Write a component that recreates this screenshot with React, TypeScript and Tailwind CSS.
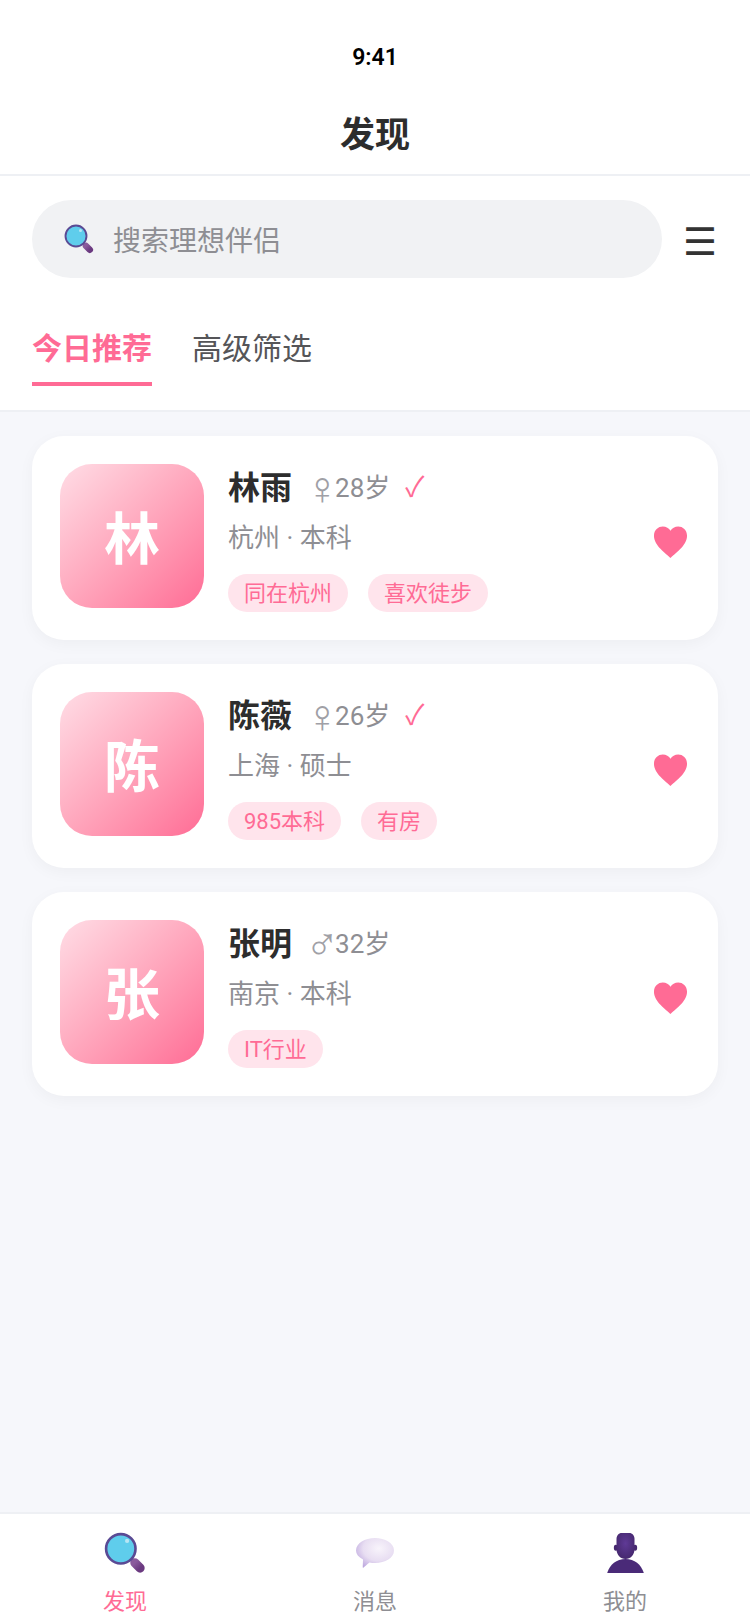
import React from "react";

const FONT = 'Roboto, "Noto Sans CJK SC", sans-serif';

interface Person {
  initial: string;
  name: string;
  gender: string;
  age: string;
  verified: boolean;
  info: string;
  tags: string[];
}

const PEOPLE: Person[] = [
  { initial: "林", name: "林雨", gender: "♀", age: "28岁", verified: true, info: "杭州 · 本科", tags: ["同在杭州", "喜欢徒步"] },
  { initial: "陈", name: "陈薇", gender: "♀", age: "26岁", verified: true, info: "上海 · 硕士", tags: ["985本科", "有房"] },
  { initial: "张", name: "张明", gender: "♂", age: "32岁", verified: false, info: "南京 · 本科", tags: ["IT行业"] },
];

const SearchIcon = ({ id, className }: { id: string; className: string }) => (
  <svg viewBox="0 0 32 32" className={className}>
    <defs>
      <linearGradient id={id} x1="0" y1="0" x2="1" y2="1">
        <stop offset="0" stopColor="#8a5a9c" />
        <stop offset="1" stopColor="#6b3a80" />
      </linearGradient>
    </defs>
    <path d="M19 19 L23 23" stroke="#5a4a94" strokeWidth="3" />
    <path d="M23.500 23.500 L27.500 27.500" stroke={`url(#${id})`} strokeWidth="7" strokeLinecap="round" />
    <circle cx="12.800" cy="12.800" r="11.200" fill="#5fcdec" stroke="#5a4a94" strokeWidth="2" />
    <circle cx="17.600" cy="6.800" r="1.600" fill="#b8e6f4" />
  </svg>
);

const BubbleIcon = () => (
  <svg viewBox="0 0 38 30" className="h-[30px] w-[38px]">
    <defs>
      <radialGradient id="bubble" cx="0.6" cy="0.35" r="0.75">
        <stop offset="0" stopColor="#f8f4fb" />
        <stop offset="0.55" stopColor="#e8def2" />
        <stop offset="1" stopColor="#b9a2dc" />
      </radialGradient>
    </defs>
    <path d="M19 0C29 0 38 5 38 12.500C38 20 29 25 19 25C17 25 15 24.800 13.500 24.400C11 26.500 8 29 7 30C6.500 29 7 25 7 21.500C2.500 19 0 16 0 12.500C0 5 9 0 19 0Z" fill="url(#bubble)" />
  </svg>
);

const PersonIcon = () => (
  <svg viewBox="0 0 110 120" className="h-[40px] w-[37px]">
    <defs>
      <radialGradient id="person" cx="0.5" cy="0.4" r="0.6">
        <stop offset="0" stopColor="#5f3a96" />
        <stop offset="1" stopColor="#46286f" />
      </radialGradient>
    </defs>
    <ellipse cx="26" cy="44" rx="6" ry="9" fill="#46286f" />
    <ellipse cx="84" cy="44" rx="6" ry="9" fill="#46286f" />
    <path d="M0 120C8 94 28 78 55 78C82 78 102 94 110 120Z" fill="#4a2a78" />
    <path d="M44 0H66C76 0 82 8 82 18V48C82 66 70 78 55 78C40 78 28 66 28 48V18C28 8 34 0 44 0Z" fill="url(#person)" />
  </svg>
);

const Card = ({ person }: { person: Person }) => (
  <div className="flex h-[204px] items-start rounded-[32px] bg-white pl-[28px] pr-[30px] pt-[28px] shadow-[0_4px_16px_rgba(0,0,0,0.04)]">
    <div className="flex h-[144px] w-[144px] shrink-0 items-center justify-center rounded-[32px] bg-gradient-to-br from-[#ffdde6] to-[#ff6b95] pt-[8px] text-[56px] font-bold text-white">
      {person.initial}
    </div>
    <div className="ml-[24px] flex min-w-0 flex-1 flex-col">
      <div className="flex h-[48px] items-center">
        <span className="text-[32px] font-bold leading-[48px] text-[#2d2d2d]">{person.name}</span>
        <span className="ml-[13px] flex w-[30px] justify-start text-[46px] leading-[40px] text-[#a0a0a6]" style={{ fontFamily: '"Liberation Sans", sans-serif' }}>{person.gender}</span>
        <span className="text-[26px] leading-[40px] text-[#8e8e93]">{person.age}</span>
        {person.verified && <span className="ml-[15px] text-[28px] leading-[40px] text-[#ff6b95]">✓</span>}
      </div>
      <div className="mt-[5px] text-[26px] leading-[42px] text-[#8e8e93]">{person.info}</div>
      <div className="mt-[15px] flex gap-[20px]">
        {person.tags.map((tag) => (
          <span key={tag} className="flex h-[38px] items-center rounded-full bg-[#ffe4ec] px-[16px] text-[22px] text-[#ff6b95]">
            {tag}
          </span>
        ))}
      </div>
    </div>
    <svg viewBox="0 0 36 34" className="mt-[61px] h-[34px] w-[35px] shrink-0">
      <path d="M18 33.500C14 29 1 21 1 10.500C1 4.500 5.500 1 10 1C13.500 1 16.500 2.800 18 5.500C19.500 2.800 22.500 1 26 1C30.500 1 35 4.500 35 10.500C35 21 22 29 18 33.500Z" fill="#ff6b95" />
    </svg>
  </div>
);

export default function App() {
  return (
    <div className="flex h-[1624px] w-[750px] flex-col overflow-hidden bg-[#f6f7fb]" style={{ fontFamily: FONT }}>
      <div className="bg-white">
        <div className="flex h-[88px] items-end justify-center pb-[14px] text-[23px] font-semibold leading-[32px] text-black">9:41</div>
        <div className="flex h-[88px] items-center justify-center border-b-2 border-[#eef0f4] pt-[10px] text-[35px] font-bold text-[#2d2d2d]">发现</div>
      </div>

      <div className="flex items-center bg-white px-[32px] pb-[24px] pt-[24px]">
        <div className="flex h-[78px] w-[630px] items-center rounded-full bg-[#f1f2f4] pl-[32px]">
          <SearchIcon id="search-top" className="h-[30px] w-[30px]" />
          <span className="ml-[19px] pt-[5px] text-[28px] text-[#8e8e93]">搜索理想伴侣</span>
        </div>
        <span className="ml-[21px] pt-[6px] text-[38px] leading-[44px] text-[#333333]">☰</span>
      </div>

      <div className="flex h-[110px] gap-[40px] border-b-2 border-[#eef0f4] bg-white px-[32px]">
        <div className="flex h-[84px] items-center border-b-4 border-[#ff6b95] pt-[12px] text-[30px] font-bold text-[#ff6b95]">今日推荐</div>
        <div className="flex h-[84px] items-center pt-[9px] text-[30px] text-[#555558]">高级筛选</div>
      </div>

      <div className="flex flex-1 flex-col gap-[24px] px-[32px] pt-[24px]">
        {PEOPLE.map((person) => (
          <Card key={person.name} person={person} />
        ))}
      </div>

      <div className="flex h-[112px] border-t-2 border-[#eef0f4] bg-white">
        <div className="flex flex-1 flex-col items-center pt-[17px]">
          <div className="flex h-[44px] items-center">
            <SearchIcon id="search-nav" className="h-[42px] w-[42px]" />
          </div>
          <span className="mt-[9px] text-[22px] leading-[36px] text-[#ff6b95]">发现</span>
        </div>
        <div className="flex flex-1 flex-col items-center pt-[17px]">
          <div className="flex h-[44px] items-center">
            <BubbleIcon />
          </div>
          <span className="mt-[9px] text-[22px] leading-[36px] text-[#8e8e93]">消息</span>
        </div>
        <div className="flex flex-1 flex-col items-center pt-[17px]">
          <div className="flex h-[44px] items-center">
            <PersonIcon />
          </div>
          <span className="mt-[9px] text-[22px] leading-[36px] text-[#8e8e93]">我的</span>
        </div>
      </div>
    </div>
  );
}
